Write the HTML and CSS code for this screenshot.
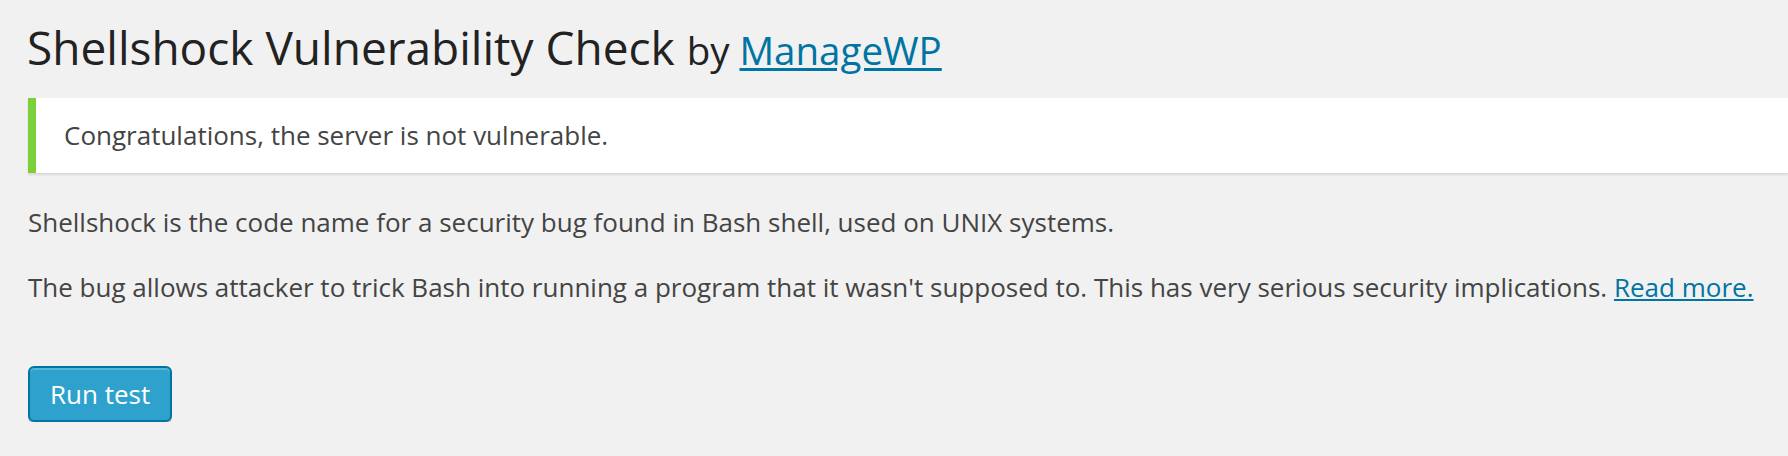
FILE: index.html
```html
<!DOCTYPE html>
<html lang="en">
<head>
<meta charset="utf-8">
<title>Shellshock Vulnerability Check</title>
<link rel="stylesheet" href="styles.css">
</head>
<body>
<div class="wrap">
  <h2 class="title">Shellshock Vulnerability Check <span class="by">by <a href="#">ManageWP</a></span></h2>
  <div class="notice">
    <p>Congratulations, the server is not vulnerable.</p>
  </div>
  <p class="text">Shellshock is the code name for a security bug found in Bash shell, used on UNIX systems.</p>
  <p class="text">The bug allows attacker to trick Bash into running a program that it wasn't supposed to. This has very serious security implications. <a href="#">Read more.</a></p>
  <div class="submit">
    <button class="button-primary" type="button">Run test</button>
  </div>
</div>
</body>
</html>
```

FILE: styles.css
```css
html, body {
  margin: 0;
  padding: 0;
  background: #f1f1f1;
}

body {
  font-family: "Open Sans", "Noto Sans", sans-serif;
  color: #444;
  font-size: 26px;
  line-height: 39px;
}

a {
  color: #0074a2;
  text-decoration: underline;
}

.wrap {
  padding: 18px 0 0 27px;
}

.title {
  margin: 0 0 22px 0;
  font-size: 46px;
  line-height: 58px;
  font-weight: 400;
  color: #222;
}

.by {
  font-size: 38.5px;
  line-height: 1;
}

.by a {
  text-underline-offset: 3px;
}

.notice {
  margin: 0 0 30px 1px;
  background: #fff;
  border-left: 8px solid #7ad03a;
  box-shadow: 0 2px 2px 0 rgba(0, 0, 0, 0.1);
  padding: 2px 24px;
}

.notice p {
  margin: 12px 0;
  padding: 4px;
}

.text {
  margin: 26px 0 26px 1px;
}

.submit {
  display: flex;
  margin: 59px 0 0 1px;
}

.button-primary {
  font-family: "Open Sans", "Noto Sans", sans-serif;
  font-size: 26px;
  line-height: 52px;
  height: 56px;
  padding: 0 20px 2px;
  margin: 0;
  color: #fff;
  background: #2ea2cc;
  border: 2px solid #0074a2;
  border-radius: 6px;
  box-shadow: inset 0 2px 0 rgba(120, 200, 230, 0.5), 0 2px 0 rgba(0, 0, 0, 0.15);
  cursor: pointer;
}
```
